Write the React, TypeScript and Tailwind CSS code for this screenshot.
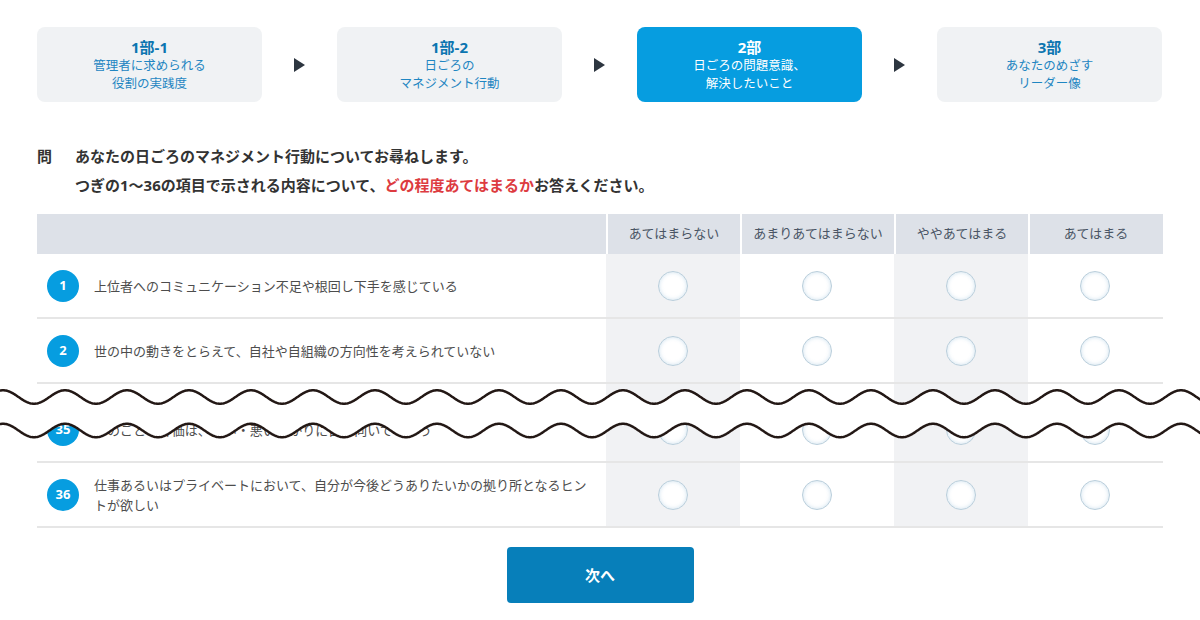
import React from "react";

const FONT = { fontFamily: '"Noto Sans", "Noto Sans CJK JP", sans-serif' };

const steps = [
  { title: "1部-1", lines: ["管理者に求められる", "役割の実践度"], active: false },
  { title: "1部-2", lines: ["日ごろの", "マネジメント行動"], active: false },
  { title: "2部", lines: ["日ごろの問題意識、", "解決したいこと"], active: true },
  { title: "3部", lines: ["あなたのめざす", "リーダー像"], active: false },
];

const choices = ["あてはまらない", "あまりあてはまらない", "ややあてはまる", "あてはまる"];

const GRID = "grid grid-cols-[569px_134px_154px_134px_134px]";

function Radio() {
  return (
    <span className="block w-[30px] h-[30px] rounded-full bg-white border border-[#b9cedb] shadow-[inset_0_0_4px_rgba(140,185,215,0.45)]" />
  );
}

function Row({ no, text }: { no: number; text: React.ReactNode }) {
  return (
    <div className={`${GRID} h-[65px] border-b-2 border-[#e6e6e6]`}>
      <div className="flex items-center pl-[10px] pr-[14px]">
        <span className="shrink-0 w-[32px] h-[32px] rounded-full bg-[#069de0] text-white text-[13px] font-bold flex items-center justify-center">
          {no}
        </span>
        <p className="ml-[15px] text-[13px] leading-[20px] text-[#4d4d4d]">{text}</p>
      </div>
      {choices.map((c, i) => (
        <div
          key={c}
          className={`flex items-center justify-center ${i % 2 === 0 ? "bg-[#f1f2f4]" : ""}`}
        >
          <Radio />
        </div>
      ))}
    </div>
  );
}

// the "break" mark between row 2 and row 35
function WaveBreak() {
  const period = 62;
  const amp = 6.75;
  const c1 = 17;
  const c2 = 50.5;
  const y = (x: number, c: number) => c - amp * Math.cos((2 * Math.PI * (x - 3)) / period);
  const top: string[] = [];
  const bottom: string[] = [];
  for (let x = -2; x <= 1202; x += 1) {
    top.push(`${x},${y(x, c1).toFixed(2)}`);
    bottom.push(`${x},${y(x, c2).toFixed(2)}`);
  }
  const fill = `M${top.join(" L")} L${bottom.slice().reverse().join(" L")} Z`;
  return (
    <svg
      className="absolute left-0 top-[380px] pointer-events-none"
      width="1200"
      height="70"
      viewBox="0 0 1200 70"
    >
      <path d={fill} fill="#fff" />
      <path d={`M${top.join(" L")}`} fill="none" stroke="#231815" strokeWidth="2.5" />
      <path d={`M${bottom.join(" L")}`} fill="none" stroke="#231815" strokeWidth="2.5" />
    </svg>
  );
}

export default function App() {
  return (
    <div className="relative w-[1200px] h-[620px] bg-white overflow-hidden" style={FONT}>
      <div className="px-[37px] pt-[27px]">
        {/* Steps */}
        <div className="flex items-center">
          {steps.map((s, i) => (
            <React.Fragment key={s.title}>
              {i > 0 && (
                <div className="w-[75px] flex justify-center">
                  <svg width="11" height="14" viewBox="0 0 11 14">
                    <path d="M0 0 L11 7 L0 14 Z" fill="#2d3640" />
                  </svg>
                </div>
              )}
              <div
                className={`w-[225px] h-[75px] rounded-[8px] flex flex-col items-center justify-center ${
                  s.active ? "bg-[#069de0] text-white" : "bg-[#f0f2f4]"
                }`}
              >
                <div
                  className={`text-[15px] font-bold leading-[20px] ${
                    s.active ? "text-white" : "text-[#0b75b0]"
                  }`}
                >
                  {s.title}
                </div>
                {s.lines.map((l) => (
                  <div
                    key={l}
                    className={`text-[12.5px] leading-[18px] ${
                      s.active ? "text-white" : "text-[#1f86c2]"
                    }`}
                  >
                    {l}
                  </div>
                ))}
              </div>
            </React.Fragment>
          ))}
        </div>

        {/* Question */}
        <div className="mt-[40px] flex text-[15px] font-bold leading-[29px] text-[#333]">
          <span className="w-[38px]">問</span>
          <div>
            <p>あなたの日ごろのマネジメント行動についてお尋ねします。</p>
            <p>
              つぎの1～36の項目で示される内容について、
              <span className="text-[#dd3b40]">どの程度あてはまるか</span>
              お答えください。
            </p>
          </div>
        </div>

        {/* Table */}
        <div className="mt-[14px]">
          <div className={`${GRID} h-[40px] bg-[#dde1e8]`}>
            <div />
            {choices.map((c) => (
              <div
                key={c}
                className="border-l-2 border-white flex items-center justify-center text-[13px] text-[#4a5565]"
              >
                {c}
              </div>
            ))}
          </div>
          <Row no={1} text="上位者へのコミュニケーション不足や根回し下手を感じている" />
          <Row no={2} text="世の中の動きをとらえて、自社や自組織の方向性を考えられていない" />
          <div className={`${GRID} h-[14px]`}>
            <div />
            <div className="bg-[#f1f2f4]" />
            <div />
            <div className="bg-[#f1f2f4]" />
            <div />
          </div>
          <Row no={35} text="ものごとの評価は、良い・悪いばかりに目が向いてしまう" />
          <Row
            no={36}
            text="仕事あるいはプライベートにおいて、自分が今後どうありたいかの拠り所となるヒントが欲しい"
          />
        </div>

        <div className="mt-[19px] flex justify-center">
          <button className="w-[187px] h-[56px] rounded-[4px] bg-[#077fba] text-white text-[15px] font-bold">
            次へ
          </button>
        </div>
      </div>

      <WaveBreak />
    </div>
  );
}
